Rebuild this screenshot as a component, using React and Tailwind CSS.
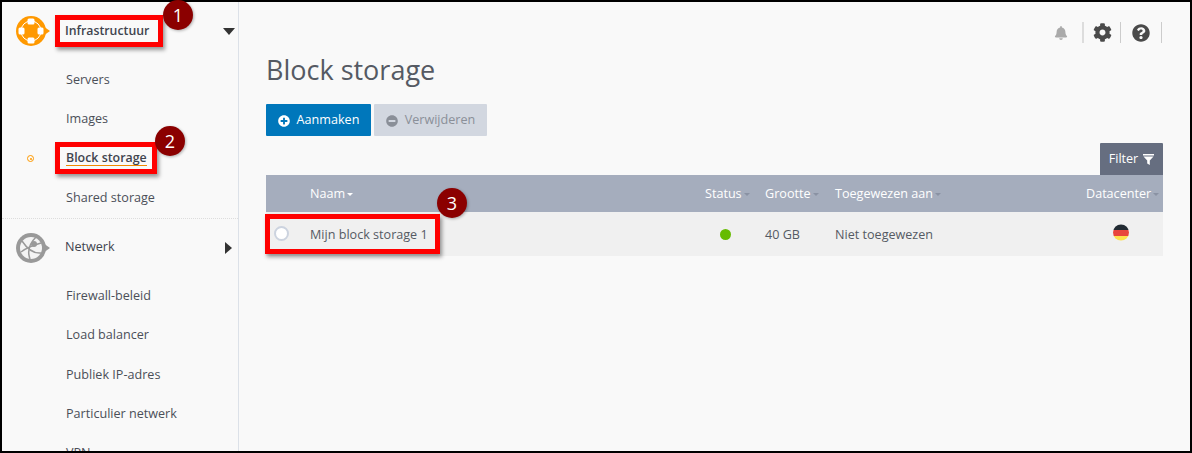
import React from 'react'
import { FaBell, FaCog, FaQuestionCircle, FaPlusCircle, FaMinusCircle } from 'react-icons/fa'

const font = { fontFamily: '"Open Sans", sans-serif' }

function InfraLogo() {
  return (
    <svg width="36" height="32" viewBox="0 0 36 32">
      <path d="M28 11 L35 16 L28 21 Z" fill="#f90" />
      <circle cx="16" cy="16" r="15" fill="#f90" />
      <circle cx="16" cy="16" r="10" fill="none" stroke="#fff" strokeWidth="1" />
      <rect x="12.5" y="3.5" width="7" height="6" rx="1.5" fill="#fff" />
      <rect x="12.5" y="22.5" width="7" height="6" rx="1.5" fill="#fff" />
      <rect x="3.5" y="12.5" width="6" height="7" rx="1.5" fill="#fff" />
      <rect x="22.5" y="12.5" width="6" height="7" rx="1.5" fill="#fff" />
    </svg>
  )
}

function NetworkLogo() {
  return (
    <svg width="36" height="32" viewBox="0 0 36 32">
      <path d="M28 11 L35 16 L28 21 Z" fill="#999" />
      <circle cx="16" cy="16" r="15" fill="#999" />
      <circle cx="16" cy="16" r="11" fill="#f4f4f4" />
      <g fill="none" stroke="#999" strokeWidth="1.5">
        <path d="M7 9 C11 15 17 22 26 21" />
        <path d="M21 5 C15 11 12 19 15 27" />
        <path d="M6 20 C11 16 19 13 26 11" />
      </g>
      <circle cx="19" cy="12" r="3" fill="#999" />
    </svg>
  )
}

function SubItem({ label, active }) {
  return (
    <div className="h-[39.3px] flex items-center pl-[25px] text-[12.6px] text-[#4b4f58]">
      <span className="w-[39px] flex justify-start">
        {active && (
          <span className="w-[7px] h-[7px] rounded-full border-[1.5px] border-[#f90] flex items-center justify-center">
            <span className="w-[2px] h-[2px] rounded-full bg-[#f90]" />
          </span>
        )}
      </span>
      {active ? (
        <span className="font-semibold text-[12.4px] border-b border-[#f08a00] leading-[14px] text-[#3f444e]">{label}</span>
      ) : (
        <span>{label}</span>
      )}
    </div>
  )
}

function Sidebar() {
  return (
    <aside className="w-[237px] shrink-0 border-r border-[#dce1e8] bg-[#f9f9f9] overflow-hidden">
      <div className="h-[58.7px] flex items-center pl-[13px] pr-[3px]">
        <InfraLogo />
        <span className="ml-[14px] text-[12.3px] font-semibold text-[#3f444e] flex-1">Infrastructuur</span>
        <span className="w-0 h-0 border-x-[6.5px] border-x-transparent border-t-[7px] border-t-[#333]" />
      </div>
      <SubItem label="Servers" />
      <SubItem label="Images" />
      <SubItem label="Block storage" active />
      <SubItem label="Shared storage" />
      <div className="border-t border-dotted border-[#dddddd]" />
      <div className="h-[58px] flex items-center pl-[13px] pr-[6px]">
        <NetworkLogo />
        <span className="ml-[14px] text-[12.6px] text-[#3f444e] flex-1">Netwerk</span>
        <span className="w-0 h-0 border-y-[6px] border-y-transparent border-l-[7px] border-l-[#333]" />
      </div>
      <SubItem label="Firewall-beleid" />
      <SubItem label="Load balancer" />
      <SubItem label="Publiek IP-adres" />
      <SubItem label="Particulier netwerk" />
      <SubItem label="VPN" />
    </aside>
  )
}

function TopIcons() {
  return (
    <div className="h-[42px] pt-[20px] flex justify-end items-start pr-[1px]">
      <span className="w-[22px] h-[21px] flex items-center justify-center mr-[10px]">
        <FaBell size={14} color="#aaaaaa" />
      </span>
      <span className="w-[2px] h-[21px] bg-[#dddddd]" />
      <span className="w-[36px] h-[21px] flex items-center justify-center">
        <FaCog size={19} color="#4a4a4a" />
      </span>
      <span className="w-px h-[21px] bg-[#cccccc]" />
      <span className="w-[40px] h-[21px] flex items-center justify-center">
        <FaQuestionCircle size={18} color="#4a4a4a" />
      </span>
      <span className="w-px h-[21px] bg-[#cccccc]" />
    </div>
  )
}

function Caret({ color }) {
  return <span className={`inline-block w-0 h-0 ml-[2px] align-middle border-x-[3.5px] border-x-transparent border-t-[3px] ${color}`} />
}

function Main() {
  return (
    <main className="flex-1 bg-[#f9f9f9] px-[27px] min-w-0">
      <TopIcons />
      <h1 className="text-[27px] leading-[36px] mt-[8px] font-normal text-[#555a63]">Block storage</h1>

      {/* Knoppen */}
      <div className="flex gap-[3px] mt-[16px]">
        <button className="h-[32px] w-[105px] pt-[1px] flex items-center justify-center gap-[7px] bg-[#0077bb] text-white text-[12.6px] rounded-[1px]">
          <FaPlusCircle size={12} />
          Aanmaken
        </button>
        <button className="h-[32px] w-[113px] pt-[1px] flex items-center justify-center gap-[7px] bg-[#d2d7e0] text-[#8a8f98] text-[12.6px] rounded-[1px]">
          <FaMinusCircle size={12} />
          Verwijderen
        </button>
      </div>

      <div className="flex justify-end mt-[7px]">
        <div className="h-[32px] w-[63px] pt-[1px] flex items-center justify-center gap-[5px] bg-[#666e80] text-white text-[12.6px] rounded-t-[1px]">
          Filter
          <svg width="11" height="11" viewBox="0 0 11 11" fill="#fff">
            <rect x="0" y="0" width="11" height="1.5" />
            <path d="M0.5 2.5 H10.5 L6.8 6.5 V11 L4.2 9.5 V6.5 Z" />
          </svg>
        </div>
      </div>

      {/* Tabel */}
      <div className="grid grid-cols-[44px_395px_60px_70px_251px_77px] h-[37px] pt-[1px] items-center bg-[#a5adbd] text-white text-[12.6px]">
        <span />
        <span>Naam<Caret color="border-t-white" /></span>
        <span>Status<Caret color="border-t-[#8a92a3]" /></span>
        <span>Grootte<Caret color="border-t-[#8a92a3]" /></span>
        <span>Toegewezen aan<Caret color="border-t-[#8a92a3]" /></span>
        <span>Datacenter<Caret color="border-t-[#8a92a3]" /></span>
      </div>
      <div className="grid grid-cols-[44px_395px_60px_70px_251px_77px] h-[44px] items-center bg-[#f0f0f0] text-[#555a63] text-[12.6px]">
        <span className="pl-[8px]">
          <span className="block w-[15px] h-[15px] -mt-[2px] rounded-full bg-white border-2 border-[#ccd3df]" />
        </span>
        <span className="pt-[2px]">Mijn block storage 1</span>
        <span className="pl-[15px]">
          <span className="block w-[11px] h-[11px] rounded-full bg-[#66bb00]" />
        </span>
        <span className="pt-[2px]">40 GB</span>
        <span className="pt-[2px]">Niet toegewezen</span>
        <span className="pl-[27px]">
          <svg width="16" height="17" viewBox="0 0 16 17" className="-mt-[4px]">
            <defs>
              <clipPath id="flag"><circle cx="8" cy="8.5" r="8" /></clipPath>
            </defs>
            <g clipPath="url(#flag)">
              <rect width="16" height="6" y="0" fill="#222b33" />
              <rect width="16" height="6" y="6" fill="#e8453c" />
              <rect width="16" height="5" y="12" fill="#fde04c" />
            </g>
          </svg>
        </span>
      </div>
    </main>
  )
}

function Badge({ n, className }) {
  return (
    <div className={`absolute w-[30px] h-[30px] rounded-full bg-[#8b0000] text-white text-[18px] flex items-center justify-center shadow-[1px_1px_3px_rgba(0,0,0,0.3)] ${className}`}>
      {n}
    </div>
  )
}

export default function App() {
  return (
    <div className="relative w-[1192px] h-[453px] overflow-hidden" style={font}>
      <div className="w-full h-full flex border-t-2 border-x-2 border-b-2 border-black overflow-hidden">
        <Sidebar />
        <Main />
      </div>

      {/* Annotaties */}
      <div className="absolute left-[55px] top-[15px] w-[108px] h-[32px] border-[5px] border-[#ff0000] shadow-[2px_3px_4px_rgba(0,0,0,0.4)]" />
      <div className="absolute left-[55px] top-[142px] w-[102px] h-[32px] border-[5px] border-[#ff0000] shadow-[2px_3px_4px_rgba(0,0,0,0.4)]" />
      <div className="absolute left-[265px] top-[214px] w-[175px] h-[40px] border-[5px] border-[#ff0000] shadow-[2px_3px_4px_rgba(0,0,0,0.4)]" />
      <Badge n="1" className="left-[163px] top-[0px]" />
      <Badge n="2" className="left-[155px] top-[126px]" />
      <Badge n="3" className="left-[437px] top-[188px]" />
    </div>
  )
}
